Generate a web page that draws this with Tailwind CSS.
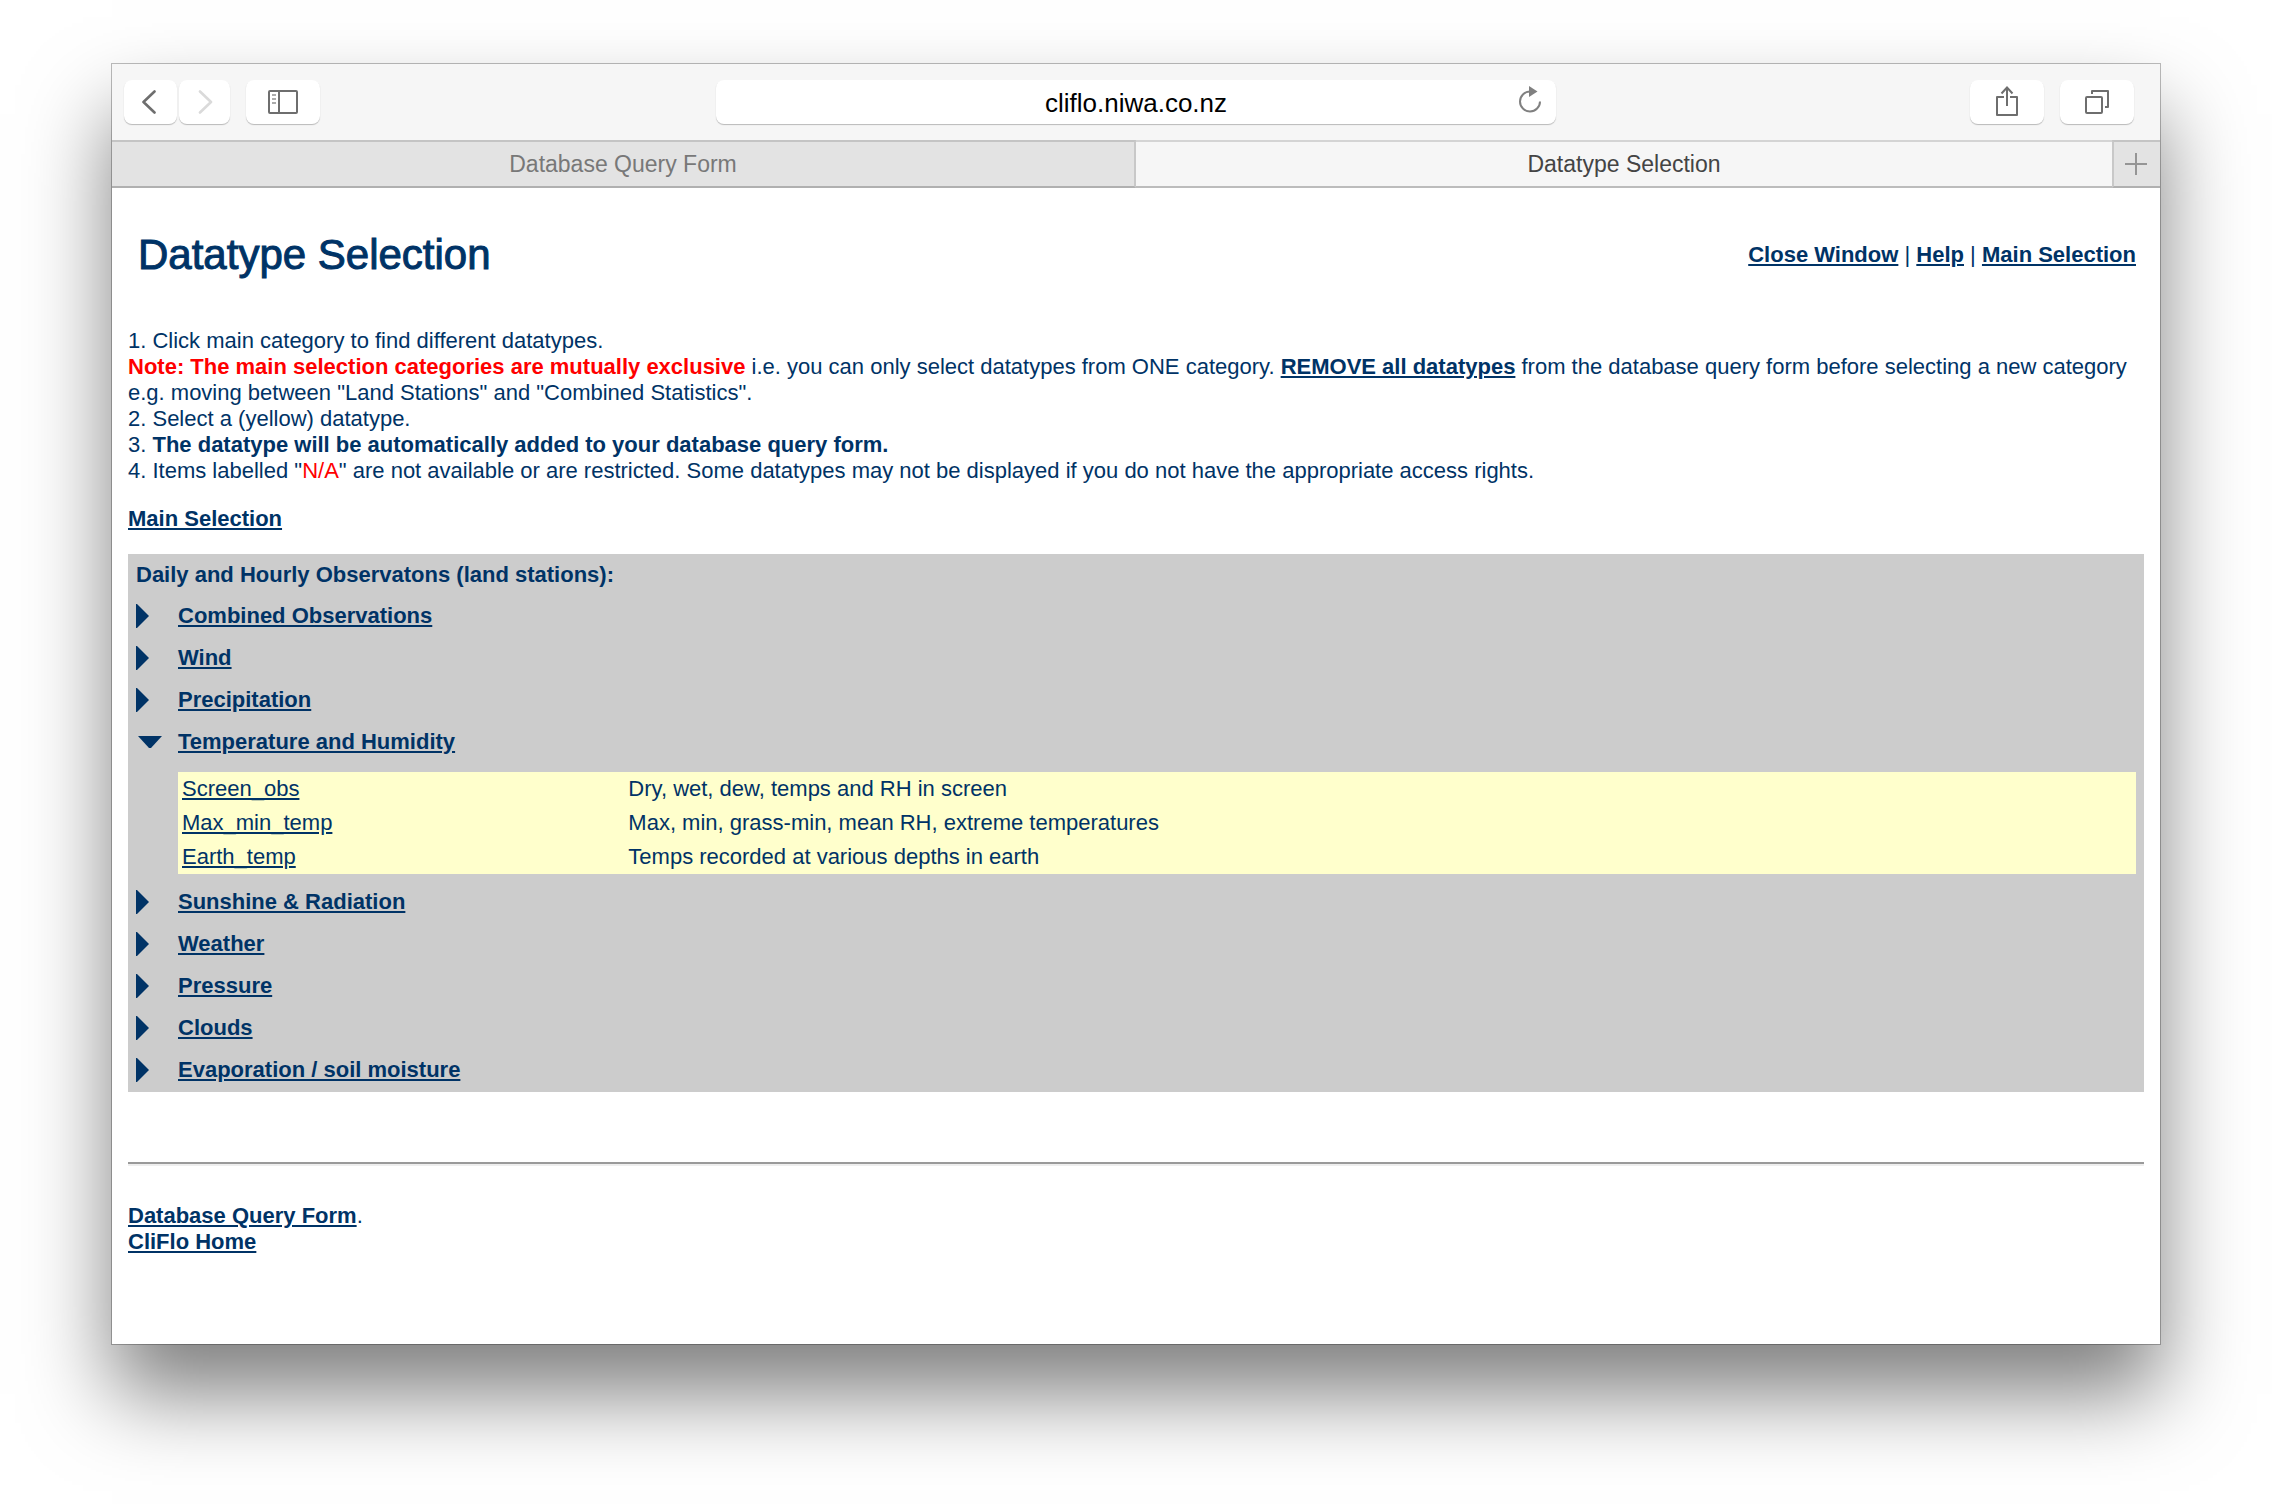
<!DOCTYPE html>
<html lang="en">
<head>
<meta charset="utf-8">
<meta name="viewport" content="width=device-width, initial-scale=1">
<title>Datatype Selection</title>
<script src="https://cdn.jsdelivr.net/npm/@tailwindcss/browser@4"></script>
</head>
<body class="min-h-screen bg-white px-28 pt-16 pb-40 font-['Liberation_Sans',Arial,sans-serif]">
<div class="bg-white shadow-[0_0_0_1px_rgba(0,0,0,0.26),0_50px_80px_rgba(0,0,0,0.5)]">

  <!-- Browser toolbar -->
  <header class="bg-[#f6f6f6]">
    <div class="grid grid-cols-[1fr_minmax(0,840px)_1fr] items-center pt-4 pb-4">
      <div class="flex pl-3">
        <button type="button" aria-label="Back" class="flex h-11 w-[53px] items-center justify-center rounded-lg bg-white pr-1 shadow-[0_1px_1px_rgba(0,0,0,0.25)]">
          <svg class="h-6 w-4" viewBox="0 0 16 24" fill="none" stroke="#6e6e6e" stroke-width="2.6" stroke-linecap="round" stroke-linejoin="round"><path d="M13.500 1.500 2.500 12 13.500 22.500"/></svg>
        </button>
        <button type="button" aria-label="Forward" class="ml-0.5 flex h-11 w-[51px] items-center justify-center rounded-lg bg-white shadow-[0_1px_1px_rgba(0,0,0,0.25)]">
          <svg class="h-6 w-4" viewBox="0 0 16 24" fill="none" stroke="#dadada" stroke-width="2.6" stroke-linecap="round" stroke-linejoin="round"><path d="M3 1.500 14 12 3 22.500"/></svg>
        </button>
        <button type="button" aria-label="Show sidebar" class="ml-4 flex h-11 w-[74px] items-center justify-center rounded-lg bg-white shadow-[0_1px_1px_rgba(0,0,0,0.25)]">
          <svg class="h-6 w-[30px]" viewBox="0 0 30 24" fill="none" stroke="#6e6e6e" stroke-width="2"><rect x="1" y="1" width="28" height="22" rx="1"/><path d="M11 1v22"/><path d="M4 5h4M4 9h4M4 13h4" stroke="#909090" stroke-width="1.600"/></svg>
        </button>
      </div>
      <div class="flex h-11 items-center rounded-lg bg-white shadow-[0_1px_1px_rgba(0,0,0,0.25)]">
        <input type="text" aria-label="Address" value="cliflo.niwa.co.nz" class="h-full min-w-0 flex-1 bg-transparent pt-0.5 pl-[52px] text-center text-[26px] text-black outline-none">
        <button type="button" aria-label="Reload" class="flex h-full w-[52px] items-center justify-center pb-1.5">
          <svg class="h-7 w-6" viewBox="0 0 24 28" fill="none"><path d="M12 6.500A10 10 0 1 0 22 16.500" stroke="#808080" stroke-width="2"/><path d="M11 1v11l8.500-5.500z" fill="#808080"/></svg>
        </button>
      </div>
      <div class="flex justify-end gap-4 pr-[26px]">
        <button type="button" aria-label="Share" class="flex h-11 w-[74px] items-center justify-center rounded-lg bg-white pb-0.5 shadow-[0_1px_1px_rgba(0,0,0,0.25)]">
          <svg class="h-[30px] w-[22px]" viewBox="0 0 22 30" fill="none" stroke="#6e6e6e" stroke-width="2"><path d="M8 11H1v18h20V11h-7" stroke-linejoin="round"/><path d="M11 20V2M5.500 7.500 11 1.500l5.500 6"/></svg>
        </button>
        <button type="button" aria-label="Show all tabs" class="flex h-11 w-[74px] items-center justify-center rounded-lg bg-white shadow-[0_1px_1px_rgba(0,0,0,0.25)]">
          <svg class="h-6 w-6" viewBox="0 0 24 24" fill="none" stroke="#6e6e6e" stroke-width="2" stroke-linejoin="round"><rect x="1" y="7" width="16" height="16" rx="1"/><path d="M7 4V1h16v16h-3"/></svg>
        </button>
      </div>
    </div>

    <!-- Tab bar -->
    <nav aria-label="Tabs" class="flex text-[23px] leading-[44px]">
      <a href="#query-form" class="w-1/2 border-y-2 border-r-2 border-t-[#c4c4c4] border-r-[#c8c8c8] border-b-[#b0b0b0] bg-[#e3e3e3] text-center text-[#787878]">Database Query Form</a>
      <a href="#datatypes" aria-current="page" class="flex-1 border-y-2 border-t-[#d4d4d4] border-b-[#bcbcbc] text-center text-[#444444]">Datatype Selection</a>
      <button type="button" aria-label="New tab" class="flex w-12 items-center justify-center border-y-2 border-l-2 border-t-[#c4c4c4] border-b-[#b0b0b0] border-l-[#c8c8c8] bg-[#e3e3e3] pr-0.5">
        <svg class="h-[22px] w-[22px]" viewBox="0 0 22 22" stroke="#959595" stroke-width="2"><path d="M11 0v22M0 11h22"/></svg>
      </button>
    </nav>
  </header>

  <main class="px-4 pb-[89px] text-[22px] leading-[26px] text-[#003366]">
    <div class="flex items-center justify-between pt-10 pr-2 pl-[10px]">
      <h1 class="text-[42px] leading-[54px] [-webkit-text-stroke:1px_#003366]">Datatype Selection</h1>
      <p><a href="#close" class="font-bold underline">Close Window</a> | <a href="#help" class="font-bold underline">Help</a> | <a href="#main" class="font-bold underline">Main Selection</a></p>
    </div>

    <div class="mt-[46px]">
      <p>1. Click main category to find different datatypes.</p>
      <p><strong class="text-[#ff0000]">Note: The main selection categories are mutually exclusive</strong> i.e. you can only select datatypes from ONE category. <a href="#remove" class="font-bold underline">REMOVE all datatypes</a> from the database query form before selecting a new category e.g. moving between "Land Stations" and "Combined Statistics".</p>
      <p>2. Select a (yellow) datatype.</p>
      <p>3. <strong>The datatype will be automatically added to your database query form.</strong></p>
      <p>4. Items labelled "<span class="text-[#ff0000]">N/A</span>" are not available or are restricted. Some datatypes may not be displayed if you do not have the appropriate access rights.</p>
    </div>

    <p class="mt-[22px]"><a href="#main" class="font-bold underline">Main Selection</a></p>

    <section id="datatypes" class="mt-[22px] bg-[#cccccc] px-2 pb-px">
      <h2 class="font-bold leading-[41px]">Daily and Hourly Observatons (land stations):</h2>
      <ul class="font-bold leading-[42px]">
        <li class="flex items-center"><svg class="mr-[18px] h-6 w-6" viewBox="0 0 24 24" fill="#003366"><path d="M0 0h1l12 12L1 24H0z"/></svg><a href="#combined" class="underline">Combined Observations</a></li>
        <li class="flex items-center"><svg class="mr-[18px] h-6 w-6" viewBox="0 0 24 24" fill="#003366"><path d="M0 0h1l12 12L1 24H0z"/></svg><a href="#wind" class="underline">Wind</a></li>
        <li class="flex items-center"><svg class="mr-[18px] h-6 w-6" viewBox="0 0 24 24" fill="#003366"><path d="M0 0h1l12 12L1 24H0z"/></svg><a href="#precipitation" class="underline">Precipitation</a></li>
        <li>
          <div class="flex items-center"><svg class="mr-[18px] h-6 w-6 overflow-visible" viewBox="0 0 24 24" fill="#003366"><path d="M2 6h24L15 18h-2z"/></svg><a href="#temperature" class="underline">Temperature and Humidity</a></div>
          <div class="mt-[9px] mb-[7px] pl-[42px]">
            <table class="w-full bg-[#ffffcc] text-left font-normal leading-[34px]">
              <tbody>
                <tr><td class="w-[23%] pl-1"><a href="#screen-obs" class="underline">Screen_obs</a></td><td>Dry, wet, dew, temps and RH in screen</td></tr>
                <tr><td class="pl-1"><a href="#max-min-temp" class="underline">Max_min_temp</a></td><td>Max, min, grass-min, mean RH, extreme temperatures</td></tr>
                <tr><td class="pl-1"><a href="#earth-temp" class="underline">Earth_temp</a></td><td>Temps recorded at various depths in earth</td></tr>
              </tbody>
            </table>
          </div>
        </li>
        <li class="flex items-center"><svg class="mr-[18px] h-6 w-6" viewBox="0 0 24 24" fill="#003366"><path d="M0 0h1l12 12L1 24H0z"/></svg><a href="#sunshine" class="underline">Sunshine &amp; Radiation</a></li>
        <li class="flex items-center"><svg class="mr-[18px] h-6 w-6" viewBox="0 0 24 24" fill="#003366"><path d="M0 0h1l12 12L1 24H0z"/></svg><a href="#weather" class="underline">Weather</a></li>
        <li class="flex items-center"><svg class="mr-[18px] h-6 w-6" viewBox="0 0 24 24" fill="#003366"><path d="M0 0h1l12 12L1 24H0z"/></svg><a href="#pressure" class="underline">Pressure</a></li>
        <li class="flex items-center"><svg class="mr-[18px] h-6 w-6" viewBox="0 0 24 24" fill="#003366"><path d="M0 0h1l12 12L1 24H0z"/></svg><a href="#clouds" class="underline">Clouds</a></li>
        <li class="flex items-center"><svg class="mr-[18px] h-6 w-6" viewBox="0 0 24 24" fill="#003366"><path d="M0 0h1l12 12L1 24H0z"/></svg><a href="#evaporation" class="underline">Evaporation / soil moisture</a></li>
      </ul>
    </section>

    <hr class="mt-[70px] h-1 border-t-2 border-b-2 border-t-[#9a9a9a] border-b-[#eeeeee]">

    <footer class="mt-[37px]">
      <p><a href="#query-form" class="font-bold underline">Database Query Form</a>.</p>
      <p><a href="#home" class="font-bold underline">CliFlo Home</a></p>
    </footer>
  </main>
</div>
</body>
</html>
